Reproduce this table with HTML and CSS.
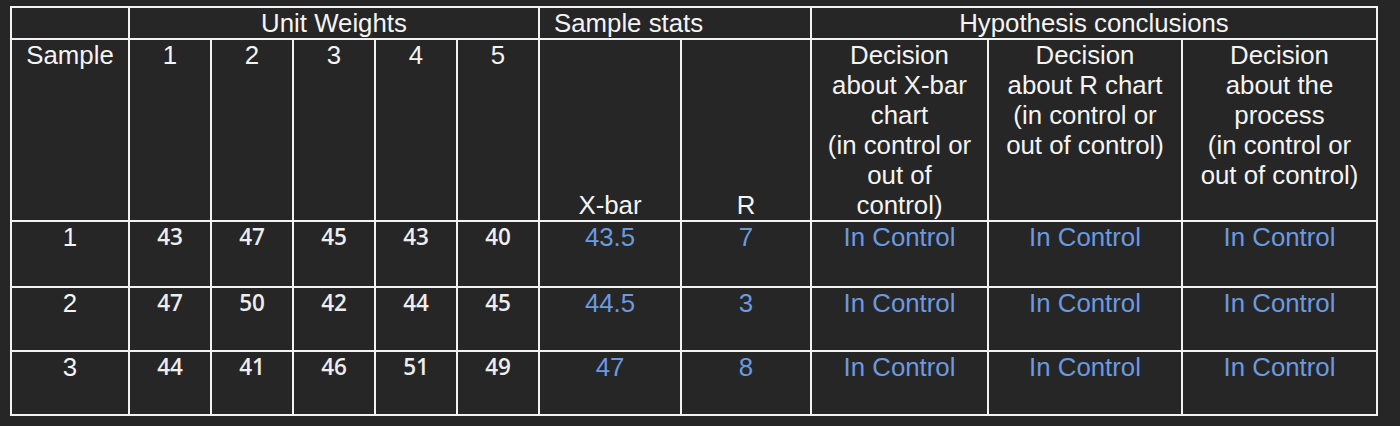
FILE: index.html
```html
<!DOCTYPE html>
<html>
<head>
<meta charset="utf-8">
<link rel="stylesheet" href="styles.css">
</head>
<body>
<div class="sheet">
  <div class="c h1"></div>
  <div class="c h1 span5">Unit Weights</div>
  <div class="c h1 span2 left">Sample stats</div>
  <div class="c h1 span3">Hypothesis conclusions</div>

  <div class="c">Sample</div>
  <div class="c">1</div>
  <div class="c">2</div>
  <div class="c">3</div>
  <div class="c">4</div>
  <div class="c">5</div>
  <div class="c bottom">X-bar</div>
  <div class="c bottom">R</div>
  <div class="c">Decision<br>about X-bar<br>chart<br>(in control or<br>out of<br>control)</div>
  <div class="c">Decision<br>about R chart<br>(in control or<br>out of control)</div>
  <div class="c">Decision<br>about the<br>process<br>(in control or<br>out of control)</div>

  <div class="c">1</div>
  <div class="c num">43</div><div class="c num">47</div><div class="c num">45</div><div class="c num">43</div><div class="c num">40</div>
  <div class="c blue">43.5</div><div class="c blue">7</div>
  <div class="c blue">In Control</div><div class="c blue">In Control</div><div class="c blue">In Control</div>

  <div class="c">2</div>
  <div class="c num">47</div><div class="c num">50</div><div class="c num">42</div><div class="c num">44</div><div class="c num">45</div>
  <div class="c blue">44.5</div><div class="c blue">3</div>
  <div class="c blue">In Control</div><div class="c blue">In Control</div><div class="c blue">In Control</div>

  <div class="c">3</div>
  <div class="c num">44</div><div class="c num">41</div><div class="c num">46</div><div class="c num">51</div><div class="c num">49</div>
  <div class="c blue">47</div><div class="c blue">8</div>
  <div class="c blue">In Control</div><div class="c blue">In Control</div><div class="c blue">In Control</div>
</div>
</body>
</html>
```

FILE: styles.css
```css
html, body {
  margin: 0;
  padding: 0;
  background: #262626;
}
body {
  padding: 6px 0 0 10px;
  font-family: "Liberation Sans", Arial, sans-serif;
  font-size: 25.8px;
  line-height: 30px;
  color: #f4f4f4;
}
.sheet {
  display: grid;
  width: 1366px;
  grid-template-columns: 118px 82px 82px 82px 82px 82px 142px 130px 177px 194px 195px;
  grid-template-rows: 32px 182px 66px 64px 64px;
  border-left: 2px solid #f2f2f2;
  border-top: 2px solid #f2f2f2;
}
.c {
  border-right: 2px solid #f2f2f2;
  border-bottom: 2px solid #f2f2f2;
  text-align: center;
  white-space: nowrap;
  overflow: hidden;
}
.span5 { grid-column: span 5; }
.span2 { grid-column: span 2; }
.span3 { grid-column: span 3; }
.left { text-align: left; padding-left: 14px; }
.bottom {
  display: flex;
  align-items: flex-end;
  justify-content: center;
}
.num {
  font-family: "Open Sans", sans-serif;
  font-size: 22.5px;
  font-weight: 600;
  color: #ededed;
}
.blue { color: #6b9ae0; }
```
